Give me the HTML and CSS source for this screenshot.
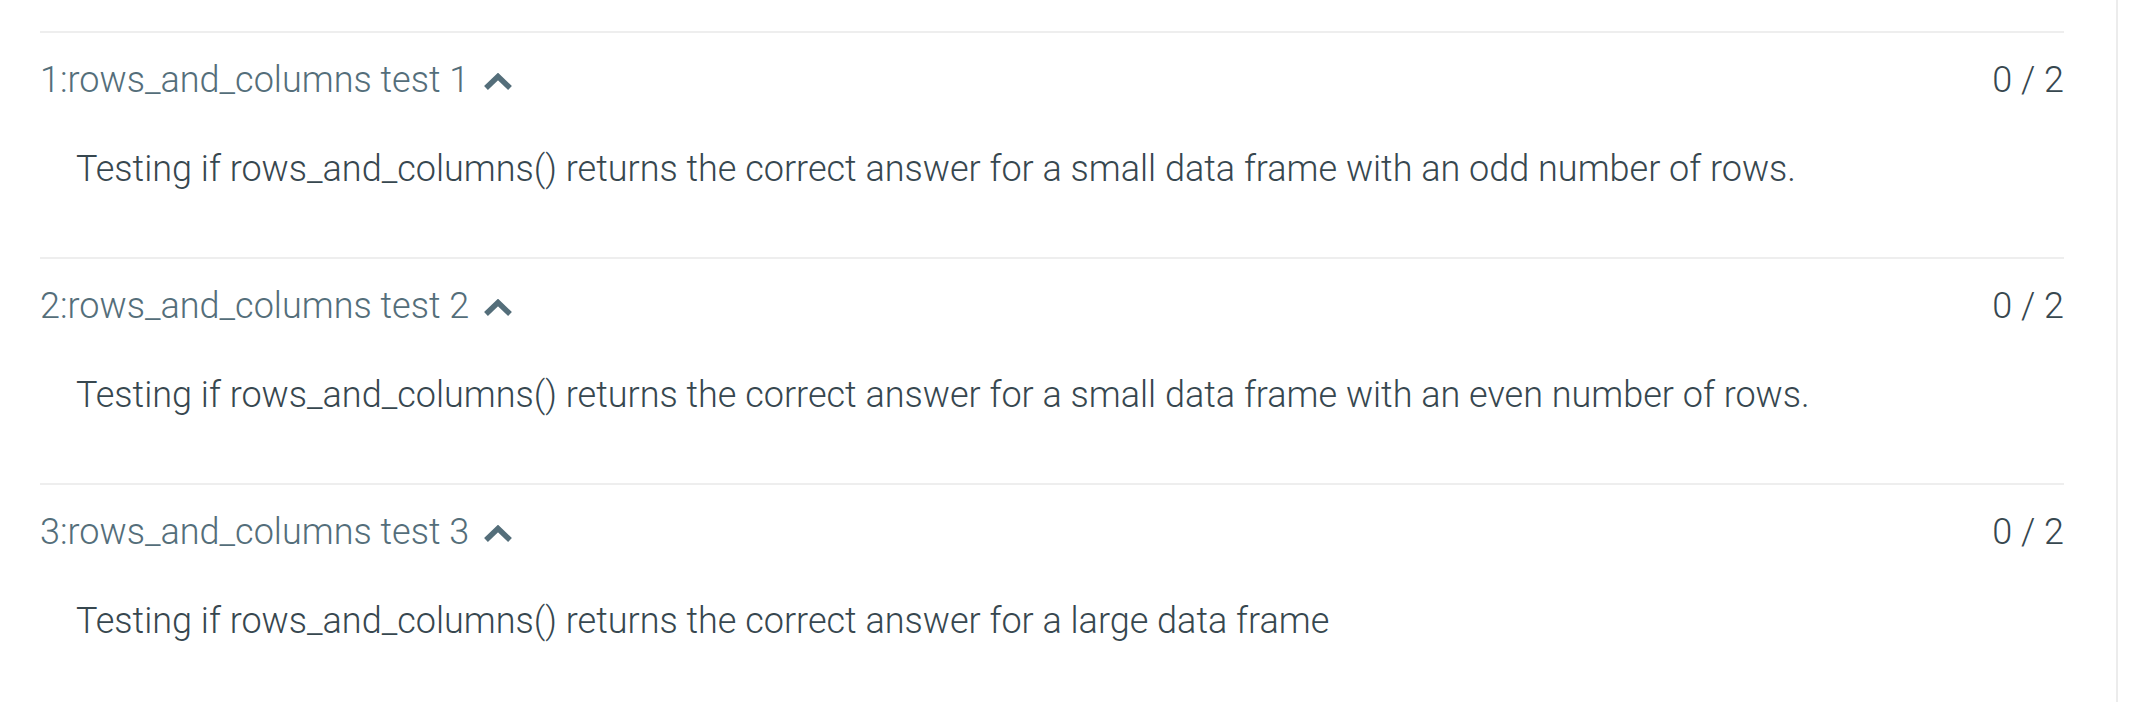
FILE: index.html
```html
<!DOCTYPE html>
<html lang="en">
<head>
    <meta charset="UTF-8">
    <meta name="viewport" content="width=device-width, initial-scale=1.0">
    <title>Test results</title>
    <link rel="stylesheet" href="styles.css">
</head>
<body>
    <div class="page">
        <!-- Test case list -->
        <div class="test">
            <div class="test-head">
                <span class="test-name">1:rows_and_columns test 1
                    <svg class="chevron" width="30" height="17" viewBox="0 0 30 17"><polyline points="3,15 15,3.5 27,15" /></svg>
                </span>
                <span class="score">0 / 2</span>
            </div>
            <p class="test-desc">Testing if rows_and_columns() returns the correct answer for a small data frame with an odd number of rows.</p>
        </div>

        <div class="test">
            <div class="test-head">
                <span class="test-name">2:rows_and_columns test 2
                    <svg class="chevron" width="30" height="17" viewBox="0 0 30 17"><polyline points="3,15 15,3.5 27,15" /></svg>
                </span>
                <span class="score">0 / 2</span>
            </div>
            <p class="test-desc">Testing if rows_and_columns() returns the correct answer for a small data frame with an even number of rows.</p>
        </div>

        <div class="test">
            <div class="test-head">
                <span class="test-name">3:rows_and_columns test 3
                    <svg class="chevron" width="30" height="17" viewBox="0 0 30 17"><polyline points="3,15 15,3.5 27,15" /></svg>
                </span>
                <span class="score">0 / 2</span>
            </div>
            <p class="test-desc">Testing if rows_and_columns() returns the correct answer for a large data frame</p>
        </div>
    </div>
</body>
</html>
```

FILE: styles.css
```css
/* Global styles */
body {
    margin: 0;
    padding: 0;
    background-color: #fff;
    font-family: Roboto, "Liberation Sans", sans-serif;
    font-weight: 300;
    font-size: 36px;
    line-height: 54px;
    color: #37474f;
}

.page {
    width: 2118px;
    min-height: 702px;
    box-sizing: border-box;
    padding: 31px 52px 0 40px;
    border-right: 2px solid #ececec; /* card edge */
}

/* Test rows */
.test {
    border-top: 2px solid #eeeeee;
    padding: 20px 0 0 0;
    height: 226px;
    box-sizing: border-box;
}

.test-head {
    display: flex;
    justify-content: space-between;
    align-items: baseline;
}

.test-name {
    color: #546e7a; /* blue grey */
    cursor: pointer;
}

.chevron {
    margin-left: 5px;
    vertical-align: 2px;
}

.chevron polyline {
    fill: none;
    stroke: #546e7a;
    stroke-width: 5.5;
}

.score {
    color: #37474f;
}

.test-desc {
    margin: 35px 0 0 36px;
}
```
